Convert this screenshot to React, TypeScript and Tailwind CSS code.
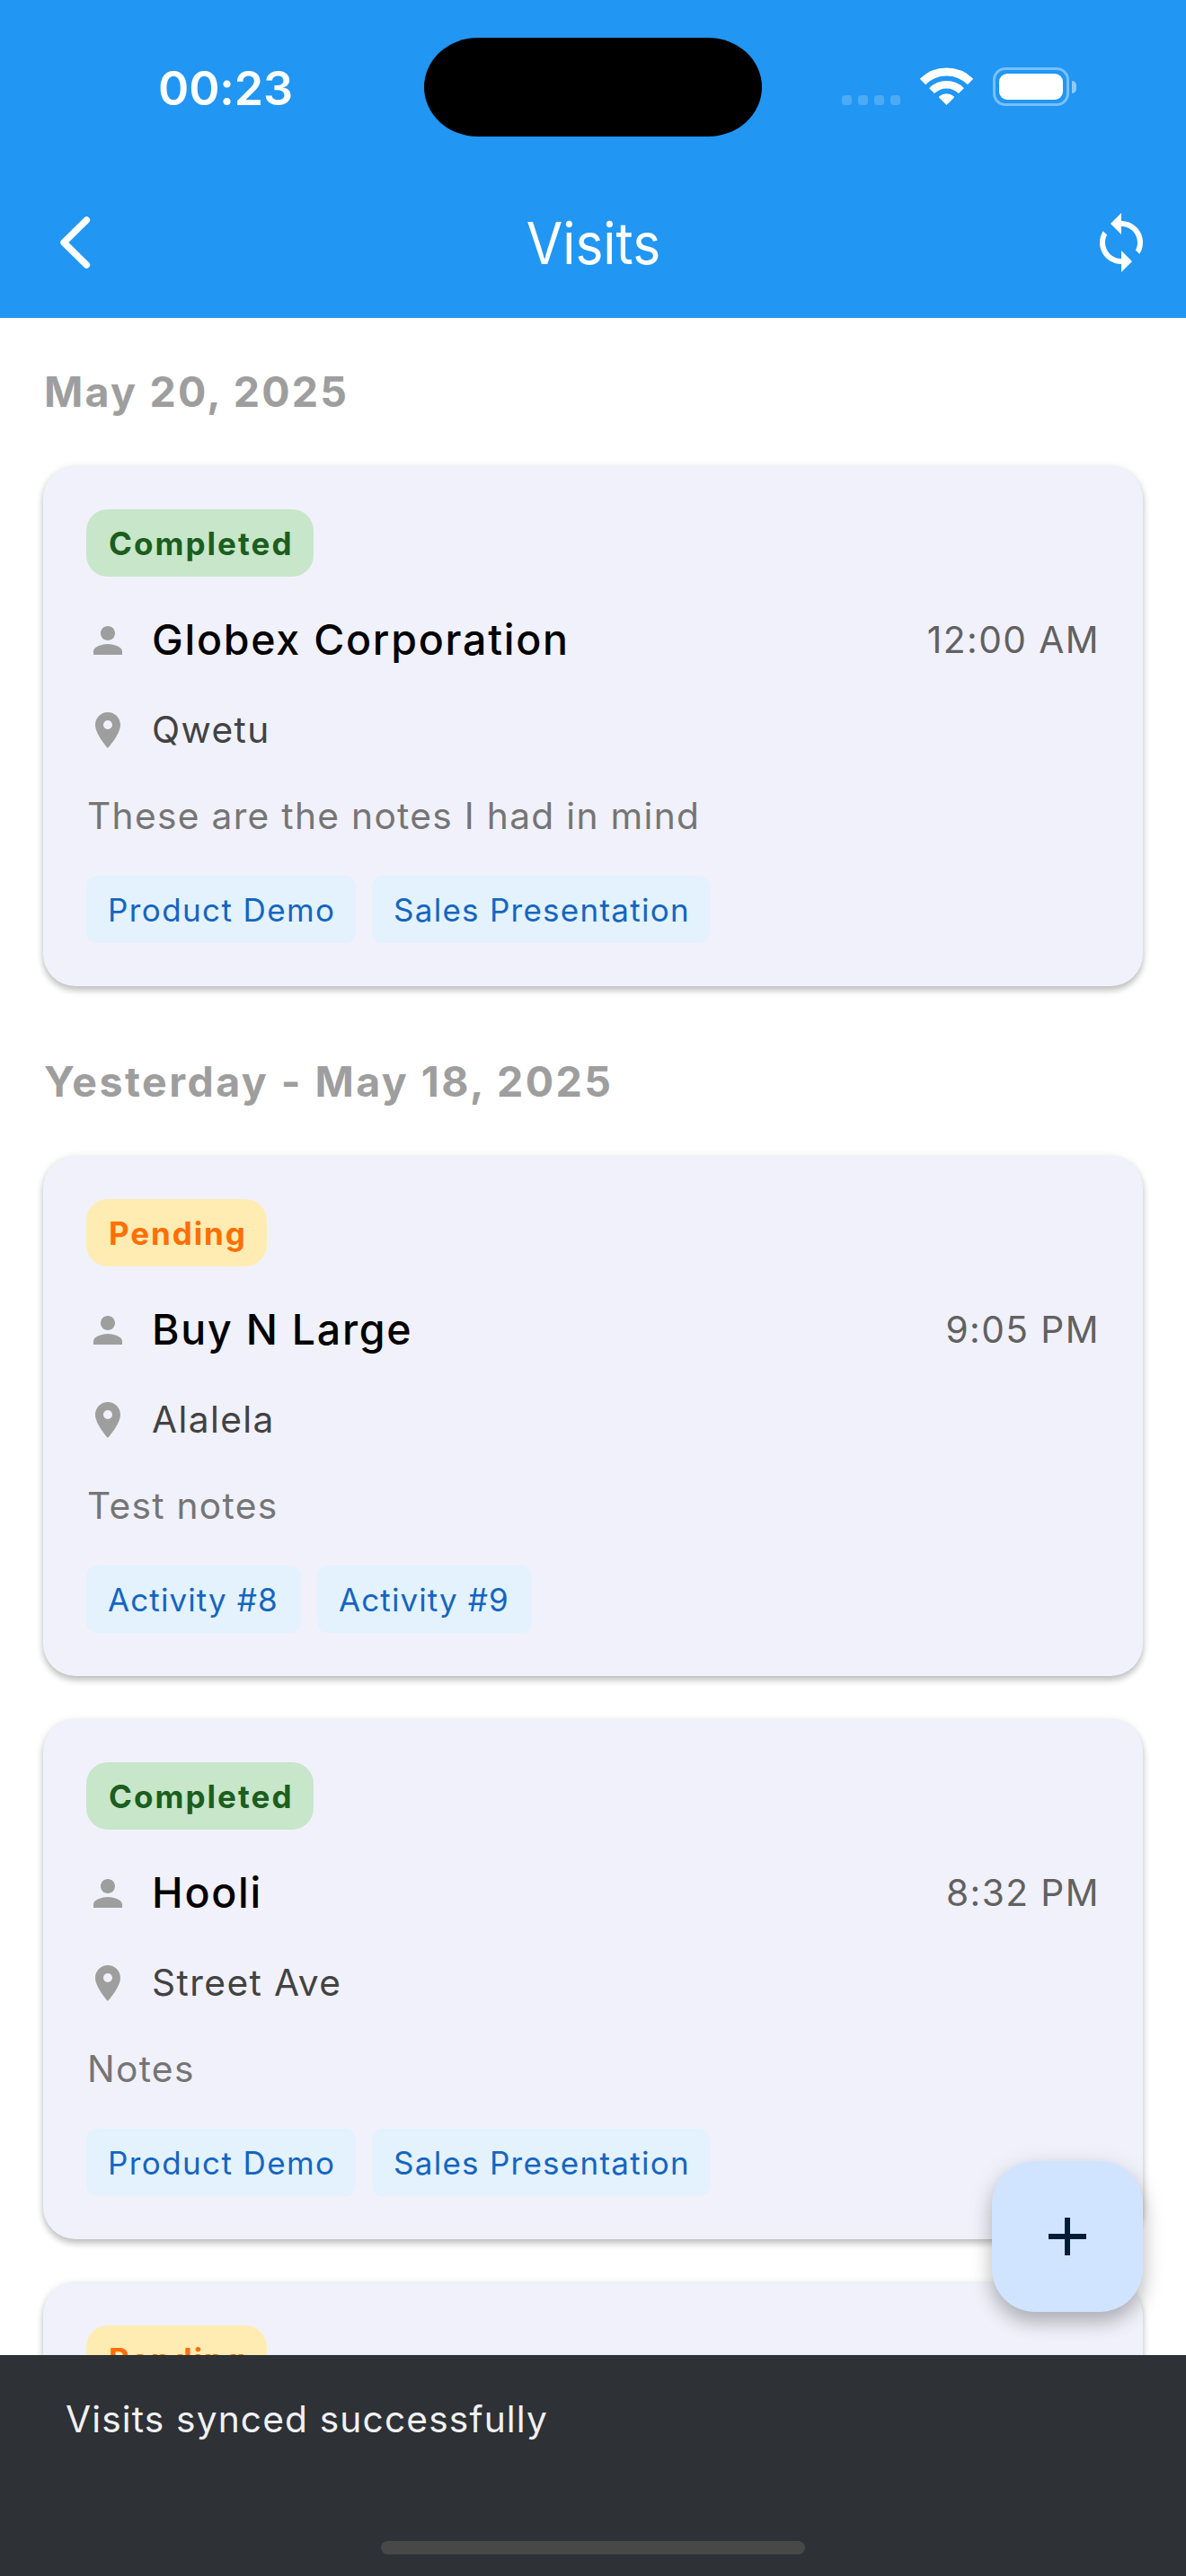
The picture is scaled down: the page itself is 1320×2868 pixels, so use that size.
import React from "react";
import { MdLocationOn, MdPerson, MdSync } from "react-icons/md";

type Status = "Completed" | "Pending";

interface Activity {
  label: string;
  size: string;
}

interface VisitDetails {
  customer: string;
  time: string;
  location: string;
  notes: string;
  activities: Activity[];
}

interface Visit {
  status: Status;
  details?: VisitDetails;
}

interface Day {
  label: string;
  tracking: string;
  visits: Visit[];
}

const productDemo: Activity = { label: "Product Demo", size: "w-[300px] tracking-[1.4px]" };
const salesPresentation: Activity = { label: "Sales Presentation", size: "w-[376px] tracking-[1.27px]" };
const activity8: Activity = { label: "Activity #8", size: "w-[239px] tracking-[1.1px]" };
const activity9: Activity = { label: "Activity #9", size: "w-[239px] tracking-[1.1px]" };

const days: Day[] = [
  {
    label: "May 20, 2025",
    tracking: "tracking-[2.22px]",
    visits: [
      {
        status: "Completed",
        details: {
          customer: "Globex Corporation",
          time: "12:00 AM",
          location: "Qwetu",
          notes: "These are the notes I had in mind",
          activities: [productDemo, salesPresentation],
        },
      },
    ],
  },
  {
    label: "Yesterday - May 18, 2025",
    tracking: "tracking-[2.45px]",
    visits: [
      {
        status: "Pending",
        details: {
          customer: "Buy N Large",
          time: "9:05 PM",
          location: "Alalela",
          notes: "Test notes",
          activities: [activity8, activity9],
        },
      },
      {
        status: "Completed",
        details: {
          customer: "Hooli",
          time: "8:32 PM",
          location: "Street Ave",
          notes: "Notes",
          activities: [productDemo, salesPresentation],
        },
      },
      { status: "Pending" },
    ],
  },
];

const badgeStyles: Record<Status, string> = {
  Completed: "w-[253px] bg-[#c8e6c9] text-[#1b5e20] tracking-[2.05px]",
  Pending: "w-[201px] bg-[#ffecb3] text-[#ff6f00] tracking-[1.9px]",
};

function StatusBar() {
  return (
    <div className="flex h-[186px] items-start pt-[42px]">
      <div className="flex h-[111px] w-[472px] items-center pl-44 pt-0.5 text-[52px] font-semibold leading-none tracking-[-0.15px]">
        00:23
      </div>
      <div className="h-[110px] w-[376px] rounded-[60px/55px] bg-black" />
      <div className="flex pl-[89px] pt-[33px]">
        <div className="mt-[31px] flex gap-[7px]">
          {[0, 1, 2, 3].map((dot) => (
            <span key={dot} className="size-[11px] rounded-[3.5px] bg-white/20" />
          ))}
        </div>
        <svg className="ml-[22px]" width="59" height="43" viewBox="0 0 59 43" fill="none" stroke="#fff">
          <path d="M2.98 15.98A37.5 37.5 0 0 1 56.02 15.98" strokeWidth="9" />
          <path d="M13.1 26.1A23.2 23.2 0 0 1 45.9 26.1" strokeWidth="8.4" />
          <path d="M29.5 42L21.2 33.7Q20.7 33 21.3 32.3Q25 29.2 29.5 29.2T37.7 32.3Q38.3 33 37.8 33.7Z" fill="#fff" stroke="none" />
        </svg>
        <div className="ml-[22px] flex items-center gap-[3px]">
          <div className="h-[43px] w-[85px] rounded-[14px] border-[3px] border-white/40 p-1">
            <div className="h-[29px] w-[71px] rounded-[9px] bg-white" />
          </div>
          <div className="h-[14px] w-[5px] rounded-r-full bg-white/50" />
        </div>
      </div>
    </div>
  );
}

function AppBar() {
  return (
    <div className="flex h-[168px] items-center justify-between pl-[60px] pr-9">
      <svg width="48" height="66" viewBox="0 0 48 66" fill="none" stroke="#fff" strokeWidth="7.4" strokeLinecap="round" strokeLinejoin="round">
        <path d="M36.4 8L11 33L36.4 58" />
      </svg>
      <h1 className="scale-x-[0.917] pl-0.5 pt-px text-[64px] leading-none">Visits</h1>
      <MdSync className="size-[72px]" />
    </div>
  );
}

function VisitInfo({ details }: { details: VisitDetails }) {
  return (
    <>
      <div className="mt-[35px] flex h-[72px] items-center">
        <MdPerson className="size-12 text-[#9e9e9e]" />
        <span className="-mt-0.5 ml-[25px] flex-1 text-[46.5px] font-medium leading-none tracking-[1.75px] text-black">
          {details.customer}
        </span>
        <span className="text-[40.7px] leading-none tracking-[1.44px] text-[#616161]">{details.time}</span>
      </div>
      <div className="mt-[34px] flex h-[60px] items-center">
        <MdLocationOn className="size-12 text-[#9e9e9e]" />
        <span className="ml-[25px] text-[40.7px] leading-none tracking-[1.4px] text-[#424242]">{details.location}</span>
      </div>
      <p className="mt-9 h-[60px] pl-px text-[40.7px] leading-[60px] tracking-[1.3px] text-[#757575]">{details.notes}</p>
      <div className="mt-9 flex gap-[18px]">
        {details.activities.map((activity) => (
          <span
            key={activity.label}
            className={`flex h-[75px] items-center whitespace-nowrap rounded-xl bg-[#e3f2fd] pl-6 pt-px text-[35px] leading-none text-[#1565c0] ${activity.size}`}
          >
            {activity.label}
          </span>
        ))}
      </div>
    </>
  );
}

function VisitCard({ visit }: { visit: Visit }) {
  return (
    <article className="flex h-[579px] shrink-0 flex-col rounded-[36px] bg-[#f1f1fb] p-12 shadow-[0_5px_7px_rgba(0,0,0,0.2),0_1px_10px_rgba(0,0,0,0.1)]">
      <div className={`flex h-[75px] items-center rounded-3xl pl-[25px] pt-px text-[35px] font-[670] leading-none ${badgeStyles[visit.status]}`}>
        {visit.status}
      </div>
      {visit.details && <VisitInfo details={visit.details} />}
    </article>
  );
}

export default function App() {
  return (
    <div className="relative flex h-[2868px] w-[1320px] flex-col overflow-hidden bg-white font-['Inter',sans-serif]">
      <header className="h-[354px] shrink-0 bg-[#2196f3] text-white">
        <StatusBar />
        <AppBar />
      </header>

      <main className="min-h-0 flex-1 overflow-hidden px-12">
        {days.map((day) => (
          <section key={day.label} className="mb-6">
            <h2 className={`h-[165px] pl-px text-[46.5px] font-[650] leading-[165px] text-[#9e9e9e] ${day.tracking}`}>
              {day.label}
            </h2>
            <div className="flex flex-col gap-12">
              {day.visits.map((visit, index) => (
                <VisitCard key={index} visit={visit} />
              ))}
            </div>
          </section>
        ))}
      </main>

      <button
        aria-label="Add visit"
        className="absolute bottom-[294px] right-12 flex size-[168px] items-center justify-center rounded-[48px] bg-[#d1e4ff] shadow-[0_12px_20px_rgba(0,0,0,0.21),0_6px_30px_rgba(0,0,0,0.1)]"
      >
        <svg width="42" height="42" viewBox="0 0 42 42" fill="#001d36">
          <path d="M18 0h6v18h18v6H24v18h-6V24H0v-6h18z" />
        </svg>
      </button>

      <footer className="relative flex h-[246px] shrink-0 flex-col items-center justify-between bg-[#2e3135] pb-6 pt-[42px]">
        <p className="w-full pl-[73px] text-[40.7px] leading-[60px] tracking-[1.14px] text-[#f0f0f4]">Visits synced successfully</p>
        <div className="h-[15px] w-[472px] rounded-full bg-[#484848]" />
      </footer>
    </div>
  );
}
